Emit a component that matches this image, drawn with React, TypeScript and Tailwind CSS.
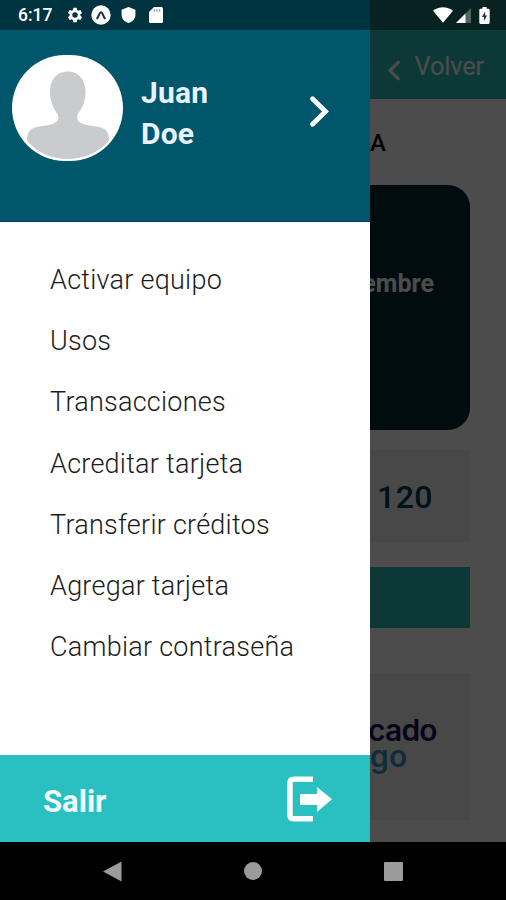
const menuItems = [
  'Activar equipo',
  'Usos',
  'Transacciones',
  'Acreditar tarjeta',
  'Transferir créditos',
  'Agregar tarjeta',
  'Cambiar contraseña',
]

const StatusBar = () => (
  <div className="absolute inset-x-0 top-0 flex h-[30px] items-center bg-black/40 text-white">
    <span className="ml-[18px] w-[48px] pt-0.5 text-[17.5px] leading-none font-medium">6:17</span>
    {/* Settings */}
    <svg className="h-[18px] w-[18px]" viewBox="0 0 24 24" fill="currentColor">
      <path d="M19.14 12.94c.04-.3.06-.61.06-.94 0-.32-.02-.64-.07-.94l2.03-1.58a.49.49 0 0 0 .12-.61l-1.92-3.32a.49.49 0 0 0-.59-.22l-2.39.96a7 7 0 0 0-1.62-.94l-.36-2.54a.48.48 0 0 0-.48-.41h-3.84a.47.47 0 0 0-.47.41l-.36 2.54c-.59.24-1.13.57-1.62.94l-2.39-.96a.48.48 0 0 0-.59.22L2.74 8.87a.48.48 0 0 0 .12.61l2.03 1.58c-.05.3-.09.63-.09.94s.02.64.07.94l-2.03 1.58a.49.49 0 0 0-.12.61l1.92 3.32c.12.22.37.29.59.22l2.39-.96c.5.38 1.03.7 1.62.94l.36 2.54c.05.24.24.41.48.41h3.84c.24 0 .44-.17.47-.41l.36-2.54a6.8 6.8 0 0 0 1.62-.94l2.39.96c.22.08.47 0 .59-.22l1.92-3.32a.48.48 0 0 0-.12-.61zM12 15.6a3.6 3.6 0 1 1 0-7.2 3.6 3.6 0 0 1 0 7.2z" />
    </svg>
    {/* Expo */}
    <svg className="ml-[7px] h-5 w-5" viewBox="0 0 20 20">
      <circle cx="10" cy="10" r="9.7" fill="white" />
      <path d="M6.2 13.2C7.6 11.6 8.6 7.3 10 7.3s2.4 4.3 3.8 5.9" fill="none" stroke="#16323b" strokeWidth="2.1" strokeLinecap="round" />
    </svg>
    <svg className="ml-[10px] h-4 w-[15px]" viewBox="0 0 15 16" fill="currentColor">
      <path d="M7.5 0 14.4 2.7V8c0 3.7-2.8 6.8-6.9 8C3.4 14.8.6 11.7.6 8V2.7z" />
    </svg>
    {/* SD card */}
    <svg className="ml-[13px] h-4 w-[14px]" viewBox="0 0 14 16">
      <path d="M5 0h7.5Q14 0 14 1.5v13q0 1.500-1.500 1.500h-11Q0 16 0 14.500V5z" fill="white" />
      <path d="M5.4 2.2v2.600M8 2.2v2.600M10.6 2.2v2.600" stroke="#8fa0a5" strokeWidth="1.3" />
    </svg>
    <div className="ml-auto flex items-center">
      <svg className="h-4 w-5" viewBox="0 0 20 16" fill="currentColor">
        <path d="M0 3.7C2.8 1.5 6.2.3 10 .3s7.2 1.2 10 3.4L10 15.7z" />
      </svg>
      <svg className="ml-[3px] h-[15px] w-[15px]" viewBox="0 0 15 15" fill="currentColor">
        <path d="M0 15 15 0v15z" opacity="0.3" />
        <path d="M0 15 9.500 5.500V15z" />
      </svg>
      <svg className="mr-[16px] ml-2 h-[17px] w-[11px]" viewBox="0 0 11 18">
        <path d="M3.300 0h4.400v1.800h2q1.300 0 1.300 1.300v13.400q0 1.500-1.300 1.500H1.300Q0 18 0 16.500V3.100q0-1.300 1.300-1.300h2z" fill="white" />
        <path d="M6.2 4.8 2.8 10.600H5v4.300L8.300 9H6.2z" fill="#26322f" />
      </svg>
    </div>
  </div>
)

const Screen = () => (
  <div className="flex h-[842px] flex-col bg-white">
    <header className="flex h-[99px] items-end justify-end bg-[#2abfbd] pr-[22px] pb-[17px] text-white">
      <svg className="mr-[13px] mb-px h-[21px] w-[14px]" viewBox="0 0 14 21" fill="none" stroke="currentColor" strokeWidth="3.3">
        <path d="M12.300 1.300 3 10.500l9.300 9.200" />
      </svg>
      <span className="text-[25.5px] leading-8 tracking-[-0.2px]">Volver</span>
    </header>
    <main className="flex flex-col px-9">
      <h1 className="mt-[29px] pl-[334px] text-[24px] leading-[30px] font-medium text-black">A</h1>
      <section className="mt-[27px] flex h-[245px] justify-end rounded-[22px] bg-[#002a2d] pt-[84px] pr-[36px]">
        <span className="text-[25px] leading-[30px] font-bold text-white">embre</span>
      </section>
      <section className="mt-5 flex h-[92px] items-center justify-end bg-[#f2f2f2] pr-[37px]">
        <span className="pt-0.5 text-[32px] leading-none font-medium tracking-[0.5px] text-[#003f55]">120</span>
      </section>
      <div className="mt-[25px] h-[61px] bg-[#2abfbd]" />
      <section className="mt-[45px] flex h-[147px] flex-col bg-[#f2f2f2] pt-[44px] font-['Inter'] text-[30px] leading-[26px] font-semibold">
        <span className="pl-[332px] tracking-[-0.8px] text-[#18105c]">cado</span>
        <span className="pl-[334px] tracking-[0.2px] text-[#3a92c0]">go</span>
      </section>
    </main>
  </div>
)

const Avatar = () => (
  <div className="h-[106px] w-[111px] shrink-0 overflow-hidden rounded-[55px] bg-white">
    <svg className="h-full w-full" viewBox="0 0 111 106">
      <path
        d="M55.500 16.500c-11 0-18 8.500-17.500 21.500.4 10 4 16 7.500 21 2.500 6-.5 9-6.500 10.500-7 1.500-13.500 1.500-18.500 4-4 2-5.500 6.500-5.500 12C25 98 40 104 55.500 104S87 98 97 85.500c0-5.500-1.500-10-5.500-12-5-2.500-12-2.500-19-4-6-1.500-9-4.500-6.500-10.500 3.500-5 7-11 7.500-21 .500-13-7-21.500-18-21.500z"
        fill="#c9cbcc"
      />
    </svg>
  </div>
)

const Drawer = () => (
  <aside className="absolute top-0 left-0 flex h-[842px] w-[370px] flex-col bg-white">
    <div className="flex h-[222px] shrink-0 items-start border-b border-[#063463] bg-[#00566b] pt-[55px] pl-3">
      <Avatar />
      <p className="mt-[17px] ml-[18px] text-[30px] leading-[41px] font-bold tracking-[0.2px] text-[#e8f3ff]">
        Juan
        <br />
        Doe
      </p>
      <svg className="mt-[40px] mr-[40px] ml-auto h-[33px] w-[21px]" viewBox="0 0 21 33" fill="none" stroke="white" strokeWidth="4.8" strokeLinecap="round">
        <path d="M3.500 3.800 16.500 16.500 3.500 29.200" />
      </svg>
    </div>
    <nav className="flex grow flex-col pt-[28px] pl-[50px] text-[27px] leading-[61.2px] font-[350] tracking-[0.25px] text-[#1c1c1c]">
      {menuItems.map((item) => (
        <a key={item}>{item}</a>
      ))}
    </nav>
    <button className="flex h-[87px] shrink-0 items-center justify-between bg-[#2abfc0] pr-[38px] pl-[43px] text-[31px] font-bold text-[#f0fcff]">
      <span className="pt-[7px]">Salir</span>
      <svg className="h-[46px] w-[45px]" viewBox="0 0 45 46">
        <path d="M26 3.300H6.500Q3 3.300 3 6.800v32.400q0 3.500 3.500 3.500H26" fill="none" stroke="white" strokeWidth="5.4" />
        <path d="M13 18h17v-7L45 23.300 30 36v-7H13z" fill="white" />
      </svg>
    </button>
  </aside>
)

const NavBar = () => (
  <div className="flex h-[58px] items-center bg-black">
    <svg className="ml-[103px] h-[21px] w-[19px]" viewBox="0 0 19 21" fill="#9b9b9b">
      <path d="M18.500.500v20L0 10.500z" />
    </svg>
    <div className="ml-[122px] h-[18px] w-[18px] rounded-full bg-[#9b9b9b]" />
    <div className="ml-[122px] h-[19px] w-[19px] rounded-[1px] bg-[#9b9b9b]" />
  </div>
)

export default function App() {
  return (
    <div className="relative h-[900px] w-[506px] overflow-hidden font-['Roboto',sans-serif]">
      <Screen />
      {/* Backdrop */}
      <div className="absolute inset-x-0 top-0 h-[842px] bg-black/70" />
      <Drawer />
      <StatusBar />
      <NavBar />
    </div>
  )
}
